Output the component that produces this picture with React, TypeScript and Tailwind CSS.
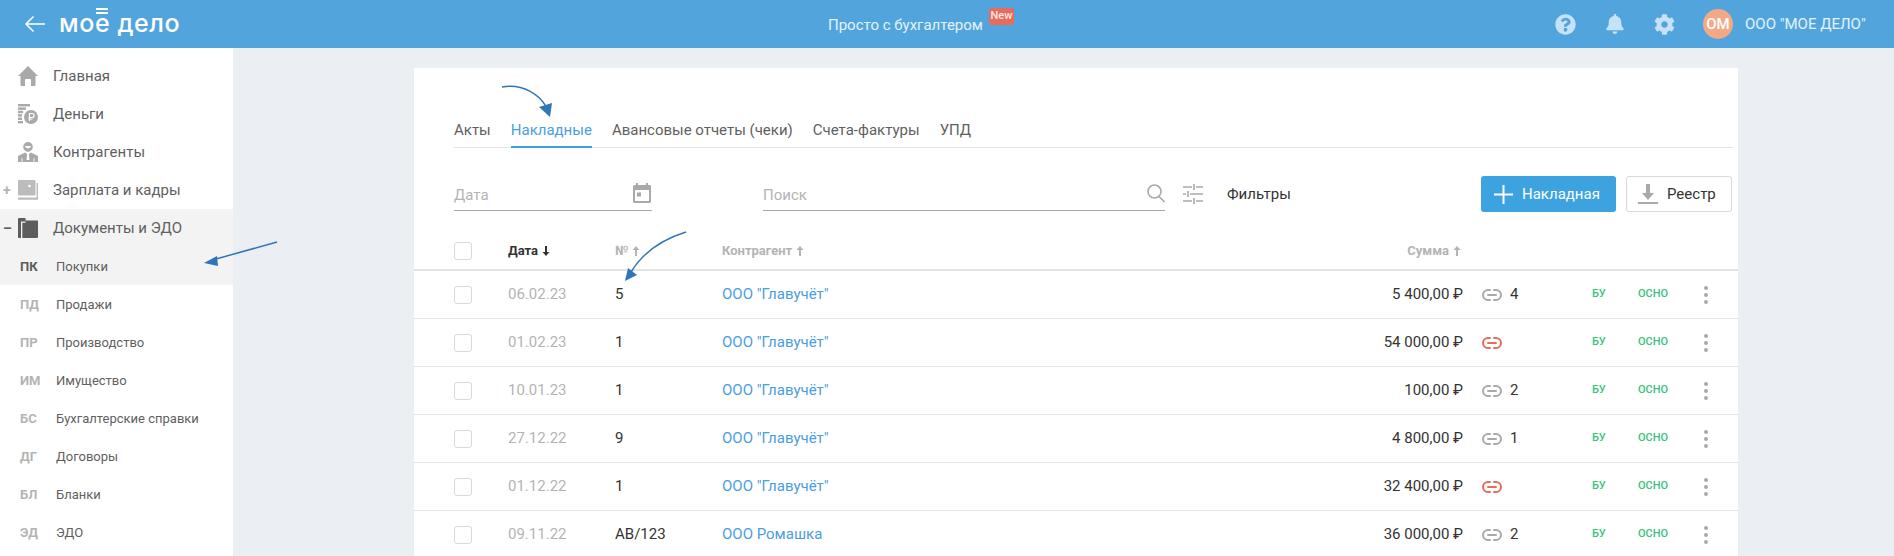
import React from 'react'
import { FaBell, FaCog, FaQuestionCircle } from 'react-icons/fa'

const font = { fontFamily: 'Roboto, sans-serif' }

const HomeIcon = () => (
    <svg width="20" height="20" viewBox="0 0 20 20" fill="#a9a9a9">
        <path d="M10 0 20 10h-2.500v9a1 1 0 0 1-1 1H13v-6a1 1 0 0 0-1-1H8a1 1 0 0 0-1 1v6H3.500a1 1 0 0 1-1-1v-9H0z" />
    </svg>
)

const MoneyIcon = () => (
    <svg width="20" height="20" viewBox="0 0 20 20" fill="#a9a9a9">
        <rect x="0" y="0" width="12" height="2.4" />
        <rect x="0" y="3.4" width="8" height="2.4" />
        <rect x="0" y="6.8" width="5" height="2.4" />
        <rect x="0" y="10.2" width="4" height="2.4" />
        <rect x="0" y="13.6" width="4" height="2.4" />
        <rect x="0" y="17" width="5" height="2.4" />
        <circle cx="13" cy="13" r="7" />
        <path d="M11.5 17v-7.5h2.6a2 2 0 0 1 0 4h-3.6M10.5 15h4" stroke="#fff" strokeWidth="1.2" fill="none" />
    </svg>
)

const PersonIcon = () => (
    <svg width="20" height="20" viewBox="0 0 20 20" fill="#a9a9a9">
        <path d="M10 0a4.800 4.800 0 0 1 4.800 4.800c0 2.600-2.100 5-4.800 5s-4.800-2.400-4.800-5A4.800 4.800 0 0 1 10 0z" />
        <path d="M6.800 4h6.400a3.300 3.300 0 0 1-6.400 0z" fill="#fff" />
        <path d="M7 10.500 L0 14 V20 h20 v-6 L13 10.500 L10.900 12 L11.500 18 h-3 L9.100 12z" />
        <path d="M4 16v4M16 16v4" stroke="#fff" strokeWidth="0.8" />
    </svg>
)

const WalletIcon = () => (
    <svg width="20" height="20" viewBox="0 0 20 20" fill="#bcbcbc">
        <rect x="0" y="0" width="17.500" height="15.500" rx="1" />
        <circle cx="11.500" cy="6" r="1.300" fill="#fff" />
        <path d="M18.600 3v14.500H0v2.200h20V3z" />
    </svg>
)

const FolderIcon = () => (
    <svg width="20" height="20" viewBox="0 0 20 20" fill="#5d5d5d">
        <path d="M1 0h6.500v2.500H20V19a1 1 0 0 1-1 1H1a1 1 0 0 1-1-1V1a1 1 0 0 1 1-1z" />
        <path d="M3 3.500h1.300V20H3zM3 3.500h4.500v1.200H3z" fill="#f3f3f3" />
    </svg>
)

const CalendarIcon = () => (
    <svg width="18" height="20" viewBox="0 0 18 20" fill="#a9a9a9">
        <path d="M3 0h2v2h8V0h2v2h1.500A1.500 1.500 0 0 1 18 3.500v15a1.500 1.500 0 0 1-1.500 1.500h-15A1.500 1.500 0 0 1 0 18.500v-15A1.500 1.500 0 0 1 1.500 2H3z" />
        <rect x="2" y="7" width="14" height="11" fill="#fff" />
        <rect x="4" y="9.500" width="4" height="4" />
    </svg>
)

const LinkIcon = ({ color }: { color: string }) => (
    <svg width="20" height="12" viewBox="0 0 20 12" fill="none" stroke={color} strokeWidth="2" strokeLinecap="round">
        <path d="M8 1H6a5 5 0 0 0 0 10h2" />
        <path d="M12 1h2a5 5 0 0 1 0 10h-2" />
        <path d="M6 6h8" />
    </svg>
)

const SortArrow = ({ color }: { color: string }) => (
    <svg width="8" height="10" viewBox="0 0 8 10" fill={color}>
        <path d="M4 0 7.500 4H5v6H3V4H.5z" />
    </svg>
)

const SortArrowDown = ({ color }: { color: string }) => (
    <svg width="8" height="10" viewBox="0 0 8 10" fill={color}>
        <path d="M4 10 .5 6H3V0h2v6h2.500z" />
    </svg>
)

const mainItems = [
    { name: 'Главная', icon: <HomeIcon /> },
    { name: 'Деньги', icon: <MoneyIcon /> },
    { name: 'Контрагенты', icon: <PersonIcon /> },
    { name: 'Зарплата и кадры', icon: <WalletIcon />, sign: '+' },
    { name: 'Документы и ЭДО', icon: <FolderIcon />, sign: '–', active: true }
]

const subItems = [
    { code: 'ПК', name: 'Покупки', active: true },
    { code: 'ПД', name: 'Продажи' },
    { code: 'ПР', name: 'Производство' },
    { code: 'ИМ', name: 'Имущество' },
    { code: 'БС', name: 'Бухгалтерские справки' },
    { code: 'ДГ', name: 'Договоры' },
    { code: 'БЛ', name: 'Бланки' },
    { code: 'ЭД', name: 'ЭДО' }
]

const tabs = ['Акты', 'Накладные', 'Авансовые отчеты (чеки)', 'Счета-фактуры', 'УПД']

const rows = [
    { date: '06.02.23', num: '5', agent: 'ООО "Главучёт"', sum: '5 400,00 ₽', links: '4' },
    { date: '01.02.23', num: '1', agent: 'ООО "Главучёт"', sum: '54 000,00 ₽', links: '' },
    { date: '10.01.23', num: '1', agent: 'ООО "Главучёт"', sum: '100,00 ₽', links: '2' },
    { date: '27.12.22', num: '9', agent: 'ООО "Главучёт"', sum: '4 800,00 ₽', links: '1' },
    { date: '01.12.22', num: '1', agent: 'ООО "Главучёт"', sum: '32 400,00 ₽', links: '' },
    { date: '09.11.22', num: 'АВ/123', agent: 'ООО Ромашка', sum: '36 000,00 ₽', links: '2' }
]

const Checkbox = () => <div className="w-[18px] h-[18px] rounded-[3px] border border-[#d9d9d9] bg-white" />

const Header = () => (
    <header className="relative flex items-center h-12 bg-[#52a5dc] text-white">
        <svg className="ml-[24px]" width="22" height="18" viewBox="0 0 22 18" fill="none" stroke="#fff" strokeWidth="1.500">
            <path d="M21 9H2M9.500 1.500 2 9l7.500 7.500" />
        </svg>
        <div className="relative ml-[13px] text-[25px] leading-none font-medium tracking-[0.6px] -mt-[2px]" style={{ fontFamily: 'Inter, sans-serif' }}>
            мое дело
            <span className="absolute left-[37px] top-[-3px] w-[12px] h-[6px] border-y-2 border-white" />
        </div>
        <div className="absolute left-[828px] top-[15px] text-[15px] leading-[20px] text-[#e3f2fc]">Просто с бухгалтером</div>
        <div className="absolute left-[989px] top-[8px] w-[25px] h-[17px] rounded-[3px] bg-[#ea6a5d] text-[11px] leading-[15px] font-medium text-center text-[#fde8e5]">New</div>
        <div className="ml-auto flex items-center text-[#c5e2f6]">
            <FaQuestionCircle className="w-[21px] h-[21px]" />
            <FaBell className="ml-[30px] w-[18px] h-[20px]" />
            <FaCog className="ml-[30px] w-[21px] h-[21px]" />
            <div className="ml-[28px] w-[30px] h-[30px] rounded-full bg-[#f4a986] text-white text-[15px] leading-[30px] font-medium text-center">ОМ</div>
            <div className="ml-[12px] mr-[30px] w-[119px] whitespace-nowrap text-[15px] text-[#e3f2fc]">ООО "МОЕ ДЕЛО"</div>
        </div>
    </header>
)

const Sidebar = () => (
    <aside className="w-[233px] shrink-0 bg-white pt-[9px]">
        {mainItems.map((item) => (
            <div key={item.name} className={`relative flex items-center h-[38px] pl-[18px] ${item.active ? 'bg-[#f3f3f3]' : ''}`}>
                {item.sign && (
                    <span className={`absolute left-[3px] text-[14px] font-bold leading-none ${item.active ? 'text-[#5d5d5d]' : 'text-[#b4b4b4]'}`}>{item.sign}</span>
                )}
                <span className="flex w-5 h-5 shrink-0 items-center justify-center">{item.icon}</span>
                <span className="ml-[15px] text-[15px] text-[#5f5f5f]">{item.name}</span>
            </div>
        ))}
        {subItems.map((item) => (
            <div key={item.code} className={`flex items-center h-[38px] pl-[20px] pt-[2px] ${item.active ? 'bg-[#f3f3f3]' : ''}`}>
                <span className={`w-[36px] text-[13px] font-bold ${item.active ? 'text-[#5d5d5d]' : 'text-[#b4b4b4]'}`}>{item.code}</span>
                <span className="text-[13px] text-[#5f5f5f]">{item.name}</span>
            </div>
        ))}
    </aside>
)

const Toolbar = () => (
    <div className="flex items-start mt-[28px] pl-[40px] pr-[6px]">
        <div className="flex items-center justify-between w-[198px] h-[35px] pt-[4px] border-b border-[#a8a8a8] text-[15px] text-[#b4b4b4]">
            Дата
            <span className="-mt-[5px] mr-[1px]">
                <CalendarIcon />
            </span>
        </div>
        <div className="flex items-center justify-between ml-[111px] w-[402px] h-[35px] pt-[4px] border-b border-[#a8a8a8] text-[15px] text-[#b4b4b4]">
            Поиск
            <svg className="-mt-[4px]" width="18" height="19" viewBox="0 0 18 19" fill="none" stroke="#a9a9a9" strokeWidth="1.600">
                <circle cx="7.500" cy="7.500" r="6.500" />
                <path d="M12 12.500 17.500 18" />
            </svg>
        </div>
        <svg className="ml-[18px] mt-[7px]" width="20" height="22" viewBox="0 0 20 22" fill="none" stroke="#a9a9a9" strokeWidth="1.600">
            <path d="M0 4h9M13 4h7M11 1v6M0 11h3M7 11h13M5 8v6M0 18h9M13 18h7M11 15v6" />
        </svg>
        <span className="ml-[24px] mt-[8px] text-[15px] leading-[20px] text-[#333]">Фильтры</span>
        <button className="flex items-center ml-auto w-[135px] h-[36px] pl-[13px] rounded-[3px] bg-[#3da3e0] text-white text-[15px]">
            <svg width="19" height="19" viewBox="0 0 19 19" stroke="#fff" strokeWidth="2">
                <path d="M9.500 0v19M0 9.500h19" />
            </svg>
            <span className="ml-[9px]">Накладная</span>
        </button>
        <button className="flex items-center ml-[10px] w-[106px] h-[36px] pl-[11px] rounded-[3px] border border-[#d9d9d9] bg-white text-[#333] text-[15px]">
            <svg width="20" height="20" viewBox="0 0 20 20" fill="#a9a9a9">
                <path d="M8 0h4v9h4l-6 7-6-7h4z" />
                <rect x="0" y="18" width="20" height="2" />
            </svg>
            <span className="ml-[9px]">Реестр</span>
        </button>
    </div>
)

const Table = () => (
    <div className="mt-[28px]">
        <div className="flex items-center h-[31px] pb-[7px] pl-[40px] border-b-2 border-[#e4e4e4] text-[13px] font-bold text-[#b4b4b4]">
            <div className="w-[54px]">
                <Checkbox />
            </div>
            <div className="flex items-center gap-[4px] w-[107px] text-[#333]">
                Дата <SortArrowDown color="#333" />
            </div>
            <div className="flex items-center gap-[4px] w-[107px]">
                № <SortArrow color="#b4b4b4" />
            </div>
            <div className="flex items-center gap-[4px] flex-1">
                Контрагент <SortArrow color="#b4b4b4" />
            </div>
            <div className="flex items-center gap-[4px] mr-[277px]">
                Сумма <SortArrow color="#b4b4b4" />
            </div>
        </div>
        {rows.map((row) => (
            <div key={row.date} className="flex items-center h-[48px] pl-[40px] pr-[30px] border-b border-[#e4e4e4] text-[15px]">
                <div className="w-[54px]">
                    <Checkbox />
                </div>
                <div className="w-[107px] text-[#b4b4b4]">{row.date}</div>
                <div className="w-[107px] text-[#333]">{row.num}</div>
                <div className="flex-1 text-[#4a9ee0]">{row.agent}</div>
                <div className="w-[200px] text-right text-[#333]">{row.sum}</div>
                <div className="flex items-center gap-[8px] ml-[19px] w-[110px] text-[#333]">
                    <LinkIcon color={row.links ? '#a9a9a9' : '#ea6a5d'} />
                    {row.links}
                </div>
                <div className="w-[46px] text-[11px] font-medium text-[#3dc07c]">БУ</div>
                <div className="w-[66px] text-[11px] font-medium text-[#3dc07c]">ОСНО</div>
                <div className="flex flex-col gap-[3px]">
                    <span className="w-[4px] h-[4px] rounded-full bg-[#a9a9a9]" />
                    <span className="w-[4px] h-[4px] rounded-full bg-[#a9a9a9]" />
                    <span className="w-[4px] h-[4px] rounded-full bg-[#a9a9a9]" />
                </div>
            </div>
        ))}
    </div>
)

const Arrows = () => (
    <svg className="absolute left-0 top-0 pointer-events-none" width="1894" height="556" fill="none">
        <path d="M277 242 216 259" stroke="#2f75b8" strokeWidth="1.500" />
        <path d="M204 263 217 256 218 266z" fill="#2f75b8" />
        <path d="M502 87C523 83 540 95 547 108" stroke="#2f75b8" strokeWidth="1.500" />
        <path d="M550 117 539 107 552 103z" fill="#2f75b8" />
        <path d="M686 232C660 240 642 254 631 272" stroke="#2f75b8" strokeWidth="1.500" />
        <path d="M625 281 628 268 637 275z" fill="#2f75b8" />
    </svg>
)

const App = () => {
    return (
        <div className="relative h-[556px] overflow-hidden bg-[#ebeef2]" style={font}>
            <Header />
            <div className="flex h-[508px]">
                <Sidebar />
                <main className="ml-[181px] mt-[20px] w-[1324px] bg-white overflow-hidden">
                    <div className="mt-[44px] ml-[40px] mr-[5px] flex gap-[20px] h-[36px] border-b border-[#e4e4e4] text-[15px] text-[#5f5f5f] pt-[7px]">
                        {tabs.map((tab) => (
                            <div key={tab} className={tab === 'Накладные' ? 'h-[29px] border-b-2 border-[#3da3e0] text-[#4a9ee0]' : ''}>
                                {tab}
                            </div>
                        ))}
                    </div>
                    <Toolbar />
                    <Table />
                </main>
            </div>
            <Arrows />
        </div>
    )
}

export default App
